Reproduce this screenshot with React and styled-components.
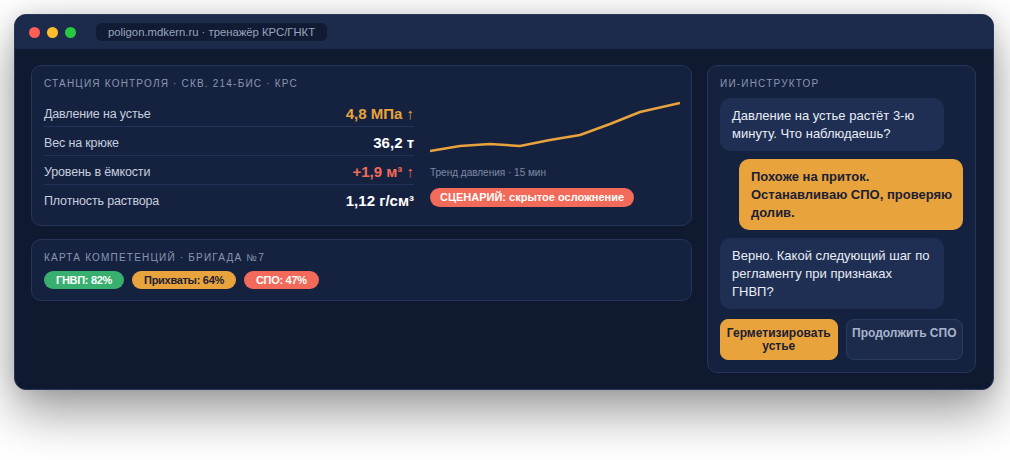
import styled, { createGlobalStyle } from "styled-components";

const GlobalStyle = createGlobalStyle`
  * {
    box-sizing: border-box;
  }

  html {
    background: #ffffff;
  }

  body {
    margin: 0;
    min-height: 100vh;
    padding: 14px 16px 14px 14px;
    background: #ffffff;
    font-family: "Liberation Sans", Arial, sans-serif;
  }
`;

const Window = styled.div`
  width: 980px;
  border-radius: 12px;
  overflow: hidden;
  background: #0f1930;
  border: 1px solid #26365a;
  box-shadow: 0 22px 50px rgba(0, 0, 0, 0.4), 0 0 20px rgba(0, 0, 0, 0.1);
`;

const TitleBar = styled.div`
  height: 34px;
  display: flex;
  align-items: center;
  padding: 0 14px;
  background: #1c2a4b;
`;

const Dot = styled.span`
  width: 11px;
  height: 11px;
  border-radius: 50%;
  margin-right: 7px;
  background: ${({ color }) => color};
`;

const Url = styled.div`
  margin-left: 13px;
  height: 18px;
  padding: 0 12px;
  border-radius: 6px;
  background: #111b33;
  color: #98a4bf;
  font-size: 11.3px;
  line-height: 18px;
`;

const Body = styled.div`
  display: grid;
  grid-template-columns: 661px 269px;
  gap: 15px;
  padding: 16px 17px 16px 16px;
  align-items: start;
`;

const Column = styled.div`
  display: flex;
  flex-direction: column;
  gap: 13px;
`;

const Card = styled.div`
  background: #15223f;
  border: 1px solid #25365a;
  border-radius: 10px;
  padding: ${({ pad }) => pad || "11px 12px"};
`;

const CardTitle = styled.div`
  font-size: 10px;
  line-height: 14px;
  letter-spacing: 1.2px;
  text-transform: uppercase;
  color: #8a96b1;
  margin-bottom: ${({ mb }) => mb || 6}px;
`;

const StationGrid = styled.div`
  display: grid;
  grid-template-columns: 370px 250px;
  gap: 16px;
`;

const Rows = styled.div`
  display: flex;
  flex-direction: column;
  padding-top: 1px;
`;

const Row = styled.div`
  height: 29px;
  display: flex;
  align-items: center;
  justify-content: space-between;
  padding-top: 3px;
  border-bottom: 1px solid ${({ last }) => (last ? "transparent" : "#22335a")};
`;

const Label = styled.span`
  font-size: 12.5px;
  letter-spacing: -0.15px;
  color: #c7cfdf;
`;

const Value = styled.span`
  font-size: 15px;
  font-weight: 700;
  color: ${({ tone }) =>
    tone === "warn" ? "#e8a33d" : tone === "bad" ? "#f26b5a" : "#ffffff"};
`;

const ChartCol = styled.div`
  display: flex;
  flex-direction: column;
  align-items: flex-start;
`;

const Caption = styled.div`
  margin-top: 11px;
  font-size: 10px;
  line-height: 14px;
  color: #7e8aa5;
`;

const Pill = styled.span`
  display: inline-block;
  height: ${({ tall }) => (tall ? 19 : 18)}px;
  padding: 0 ${({ tall }) => (tall ? 10 : 12)}px;
  border-radius: 10px;
  font-size: 11px;
  letter-spacing: ${({ tall }) => (tall ? 0 : -0.3)}px;
  line-height: ${({ tall }) => (tall ? 19 : 18)}px;
  font-weight: 700;
  background: ${({ tone }) =>
    tone === "good" ? "#37b06f" : tone === "warn" ? "#e8a33d" : "#f26b5a"};
  color: ${({ tone }) => (tone === "warn" ? "#1b2033" : "#ffffff")};
`;

const ScenarioPill = styled(Pill)`
  margin-top: 8px;
`;

const Pills = styled.div`
  display: flex;
  gap: 8px;
`;

const Chat = styled.div`
  display: flex;
  flex-direction: column;
  gap: 8px;
`;

const Bubble = styled.div`
  width: 224px;
  padding: 9px 8px 8px 12px;
  border-radius: 10px;
  font-size: 13px;
  line-height: 18px;
  align-self: ${({ me }) => (me ? "flex-end" : "flex-start")};
  background: ${({ me }) => (me ? "#e8a33d" : "#1f2f54")};
  color: ${({ me }) => (me ? "#1b2033" : "#e9edf5")};
  font-weight: ${({ me }) => (me ? 700 : 400)};
`;

const Actions = styled.div`
  margin-top: 2px;
  display: grid;
  grid-template-columns: 1fr 1fr;
  gap: 8px;
`;

const Action = styled.button`
  font-family: inherit;
  font-size: 12px;
  line-height: 13px;
  font-weight: 700;
  padding: 7px 4px 6px;
  border-radius: 8px;
  align-self: stretch;
  display: flex;
  justify-content: center;
  align-items: flex-start;
  border: 1px solid ${({ primary }) => (primary ? "#e8a33d" : "#2a3b62")};
  background: ${({ primary }) => (primary ? "#e8a33d" : "#1c2a4b")};
  color: ${({ primary }) => (primary ? "#1b2033" : "#a9b4cc")};
`;

const points = "0,54 30,49 60,47 90,49 120,43 150,38 180,27 210,15 250,6";

const rows = [
  { label: "Давление на устье", value: "4,8 МПа ↑", tone: "warn" },
  { label: "Вес на крюке", value: "36,2 т" },
  { label: "Уровень в ёмкости", value: "+1,9 м³ ↑", tone: "bad" },
  { label: "Плотность раствора", value: "1,12 г/см³" },
];

function App() {
  return (
    <>
      <GlobalStyle />
      <Window>
        <TitleBar>
          <Dot color="#ff5f57" />
          <Dot color="#febc2e" />
          <Dot color="#28c840" />
          <Url>poligon.mdkern.ru · тренажёр КРС/ГНКТ</Url>
        </TitleBar>
        <Body>
          <Column>
            <Card>
              <CardTitle>Станция контроля · скв. 214-БИС · КРС</CardTitle>
              <StationGrid>
                <Rows>
                  {rows.map((r, i) => (
                    <Row key={r.label} last={i === rows.length - 1}>
                      <Label>{r.label}</Label>
                      <Value tone={r.tone}>{r.value}</Value>
                    </Row>
                  ))}
                </Rows>
                <ChartCol>
                  <svg width="250" height="58" viewBox="0 0 250 58">
                    <polyline
                      points={points}
                      fill="none"
                      stroke="#e8a33d"
                      strokeWidth="2.5"
                      strokeLinejoin="round"
                    />
                  </svg>
                  <Caption>Тренд давления · 15 мин</Caption>
                  <ScenarioPill tall>СЦЕНАРИЙ: скрытое осложнение</ScenarioPill>
                </ChartCol>
              </StationGrid>
            </Card>
            <Card>
              <CardTitle>Карта компетенций · бригада №7</CardTitle>
              <Pills>
                <Pill tone="good">ГНВП: 82%</Pill>
                <Pill tone="warn">Прихваты: 64%</Pill>
                <Pill>СПО: 47%</Pill>
              </Pills>
            </Card>
          </Column>
          <Card pad="11px 12px 12px">
            <CardTitle mb={7}>ИИ-инструктор</CardTitle>
            <Chat>
              <Bubble>Давление на устье растёт 3-ю минуту. Что наблюдаешь?</Bubble>
              <Bubble me>
                Похоже на приток. Останавливаю СПО, проверяю долив.
              </Bubble>
              <Bubble>
                Верно. Какой следующий шаг по регламенту при признаках ГНВП?
              </Bubble>
              <Actions>
                <Action primary>Герметизировать устье</Action>
                <Action>Продолжить СПО</Action>
              </Actions>
            </Chat>
          </Card>
        </Body>
      </Window>
    </>
  );
}

export default App;
